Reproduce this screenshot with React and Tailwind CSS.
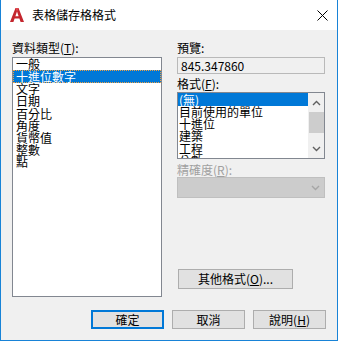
import React from 'react';

const font = { fontFamily: '"Noto Sans CJK TC", "Liberation Sans", sans-serif' };

const types = ['一般', '十進位數字', '文字', '日期', '百分比', '角度', '貨幣值', '整數', '點'];
const formats = ['(無)', '目前使用的單位', '十進位', '建築', '工程', '分數'];

const Logo = () => (
  <svg width="16" height="16" viewBox="0 0 16 16">
    <path d="M1 15 L6.5 1 H9.5 L15 15 H11.6 L10.4 11.6 H5.6 L4.4 15 Z" fill="#c4262e" />
    <path d="M6.4 9.2 H9.6 L8 4.6 Z" fill="#ffffff" />
    <path d="M6.5 1 H9.5 L8 5 Z" fill="#e0484f" />
  </svg>
);

const Chevron = ({ up, color = '#606060' }) => (
  <svg width="9" height="6" viewBox="0 0 9 6">
    <path d={up ? 'M1 5 L4.5 1.5 L8 5' : 'M1 1 L4.5 4.5 L8 1'} stroke={color} strokeWidth="1.4" fill="none" />
  </svg>
);

const Btn = ({ children, primary }) => (
  <button
    className={
      primary
        ? 'w-[73px] h-[19px] bg-[#e1e1e1] border-2 border-[#0078d7] text-[12px] leading-[13px] text-black'
        : 'w-[73px] h-[19px] bg-[#e1e1e1] border border-[#adadad] text-[12px] leading-[13px] text-black'
    }
  >
    {children}
  </button>
);

export default function App() {
  return (
    <div className="w-[338px] h-[341px] flex flex-col border-x border-b border-[#1883d7] bg-[#f0f0f0] text-black" style={font}>
      <div className="h-[30px] bg-white flex items-center pl-[8px] pr-[9px]">
        <Logo />
        <span className="ml-[7px] text-[12px] leading-[14px]">表格儲存格格式</span>
        <svg className="ml-auto" width="11" height="11" viewBox="0 0 11 11">
          <path d="M0.5 0.5 L10.5 10.5 M10.5 0.5 L0.5 10.5" stroke="#000" strokeWidth="1" />
        </svg>
      </div>

      <div className="flex-1 flex flex-col pl-[11px] pr-[11px] pt-[11px]">
        <div className="flex gap-[15px]">
          <div className="w-[150px] flex flex-col">
            <div className="text-[12px] leading-[13px]">資料類型(<span className="underline">T</span>):</div>
            <div className="mt-[3px] h-[240px] bg-white border border-[#828790]">
              {types.map((t, i) => (
                <div
                  key={t}
                  className={
                    i === 1
                      ? 'h-[13px] text-[12px] leading-[11px] pl-[2px] bg-[#0078d7] text-white border border-dotted border-[#f0a040]'
                      : 'h-[12.2px] text-[12px] leading-[12.2px] pl-[3px] whitespace-nowrap'
                    }
                >
                  {t}
                </div>
              ))}
            </div>
          </div>

          <div className="w-[148px] flex flex-col">
            <div className="text-[12px] leading-[13px]">預覽:</div>
            <div className="mt-[3px] h-[17px] border border-[#b9b9b9] bg-[#f0f0f0] text-[12px] leading-[15px] pl-[3px]">845.347860</div>
            <div className="mt-[3px] text-[12px] leading-[13px]">格式(<span className="underline">F</span>):</div>
            <div className="mt-[2px] h-[67px] bg-white border border-[#828790] flex overflow-hidden">
              <div className="flex-1">
                {formats.map((f, i) => (
                  <div
                    key={f}
                    className={
                      i === 0
                        ? 'h-[13px] text-[12px] leading-[13px] pl-[1px] bg-[#0078d7] text-white'
                        : 'h-[12.2px] text-[12px] leading-[12.2px] pl-[1px] whitespace-nowrap'
                    }
                  >
                    {f}
                  </div>
                ))}
              </div>
              <div className="w-[16px] bg-[#f0f0f0] flex flex-col items-center">
                <div className="h-[19px] flex items-center justify-center"><Chevron up /></div>
                <div className="w-[15px] h-[21px] bg-[#cdcdcd]" />
                <div className="flex-1" />
                <div className="h-[19px] flex items-center justify-center"><Chevron /></div>
              </div>
            </div>
            <div className="mt-[4px] text-[12px] leading-[13px] text-[#a0a0a0]">精確度(<span className="underline">R</span>):</div>
            <div className="mt-[1px] h-[21px] bg-[#cccccc] border border-[#bfbfbf] flex items-center justify-end pr-[4px]">
              <Chevron color="#a6a6a6" />
            </div>
            <div className="mt-[71px] h-[20px] w-[115px] ml-[1px] bg-[#e1e1e1] border border-[#adadad] text-[12px] leading-[18px] text-center">
              其他格式(<span className="underline">O</span>)...
            </div>
          </div>
        </div>

        <div className="mt-[13px] flex justify-end gap-[8px]">
          <Btn primary>確定</Btn>
          <Btn>取消</Btn>
          <Btn>說明(<span className="underline">H</span>)</Btn>
        </div>
      </div>
    </div>
  );
}
